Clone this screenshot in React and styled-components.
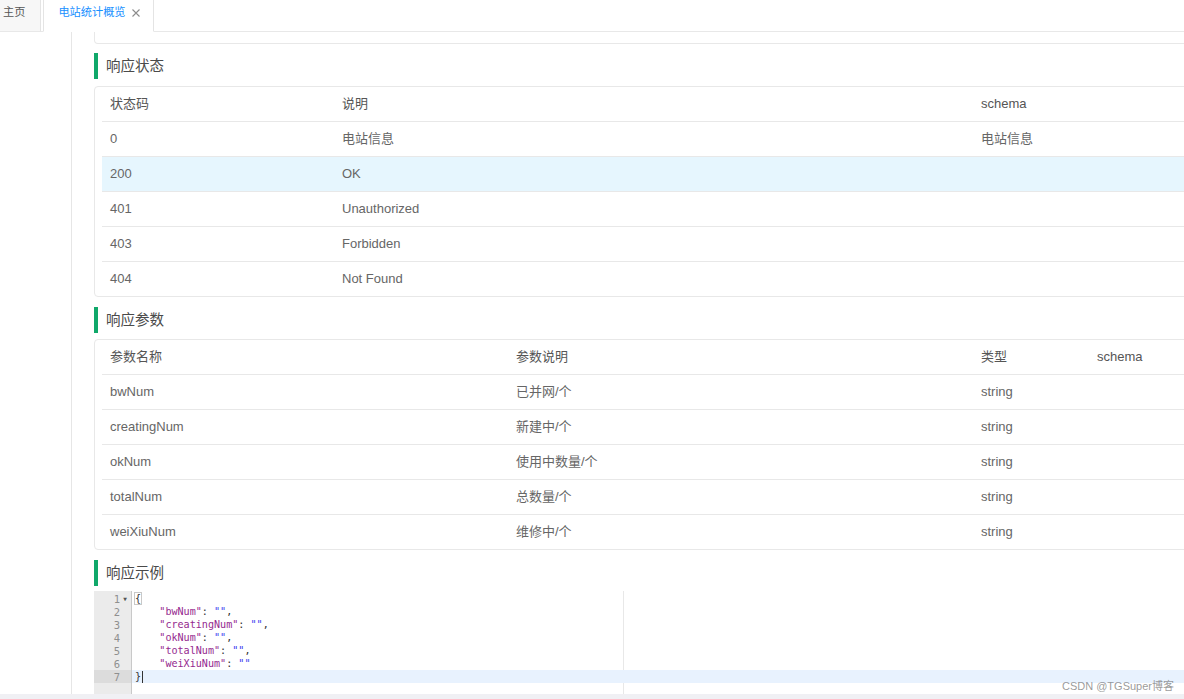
import React from 'react';
import styled, { createGlobalStyle } from 'styled-components';

const Global = createGlobalStyle`
  html, body { margin: 0; padding: 0; background: #fff; overflow: hidden; }
  body { font-family: "Liberation Sans", "Noto Sans CJK SC", sans-serif; }
  * { box-sizing: border-box; }
`;

const Page = styled.div`
  width: 1184px;
  height: 699px;
  display: flex;
  flex-direction: column;
  overflow: hidden;
  position: relative;
  background: #fff;
`;

const TabBar = styled.div`
  height: 32px;
  flex: none;
  display: flex;
  align-items: stretch;
  border-bottom: 1px solid #e8e8e8;
`;

const Tab = styled.div`
  height: 32px;
  margin-bottom: -1px;
  display: flex;
  align-items: center;
  gap: 6px;
  padding-bottom: 5px;
  font-size: 11.2px;
  line-height: 1;
  color: ${p => (p.$active ? '#1890ff' : '#555')};
  background: ${p => (p.$active ? '#fff' : '#f7f7f7')};
  border-right: 1px solid #e4e4e4;
  border-left: ${p => (p.$active ? '1px solid #e4e4e4' : 'none')};
  border-bottom: ${p => (p.$active ? '1px solid #fff' : '1px solid #e8e8e8')};
  padding-left: ${p => (p.$active ? '14px' : '3px')};
  padding-right: ${p => (p.$active ? '13px' : '15px')};
  margin-right: ${p => (p.$active ? '0' : '2px')};
`;

const CloseIcon = styled.svg`
  width: 8px;
  height: 8px;
  flex: none;
`;

const Body = styled.div`
  flex: 1;
  display: flex;
  min-height: 0;
`;

const Sidebar = styled.div`
  width: 72px;
  flex: none;
  border-right: 1px solid #e6e6e6;
  background: #fff;
`;

const Main = styled.div`
  flex: 1;
  min-width: 0;
  overflow: hidden;
  padding-left: 22px;
`;

const Inner = styled.div`
  width: 1160px;
  display: flex;
  flex-direction: column;
`;

const CardEnd = styled.div`
  height: 12px;
  border: 1px solid #e8e8e8;
  border-top: none;
  border-radius: 0 0 4px 4px;
`;

const Heading = styled.div`
  height: 26px;
  margin: ${p => (p.$first ? '9px' : '10px')} 0 ${p => p.$mb || 7}px;
  display: flex;
  align-items: center;
  border-left: 4px solid #10a86a;
  padding-left: 8px;
  padding-bottom: 1px;
  line-height: 1;
  font-size: 14.5px;
  color: #4a4a4a;
  font-family: "Noto Sans CJK SC", "Liberation Sans", sans-serif;
`;

const TableBox = styled.div`
  border: 1px solid #e8e8e8;
  border-radius: 4px;
  padding: 0 7px;
`;

const Row = styled.div`
  display: grid;
  grid-template-columns: ${p => p.$cols};
  height: 35px;
  align-items: center;
  border-bottom: 1px solid #e8e8e8;
  background: ${p => (p.$hl ? '#e6f6fe' : 'transparent')};
  &:last-child {
    border-bottom: none;
    height: 34px;
  }
`;

const Cell = styled.div`
  padding-left: 8px;
  padding-bottom: 2px;
  font-size: 13px;
  line-height: 1;
  color: ${p => (p.$head ? '#555' : '#666')};
  white-space: nowrap;
  overflow: hidden;
`;

const Editor = styled.div`
  height: 103px;
  display: flex;
  position: relative;
  font-family: "DejaVu Sans Mono", "Liberation Mono", monospace;
  font-size: 10.1px;
`;

const Gutter = styled.div`
  width: 38px;
  flex: none;
  padding-top: 1px;
  background: #ebebeb;
  border-right: 1px solid #c9c9c9;
`;

const GutterCell = styled.div`
  height: 13px;
  display: flex;
  align-items: center;
  justify-content: flex-end;
  padding-right: 1px;
  font-size: 10.5px;
  color: #8f8f8f;
  background: ${p => (p.$active ? '#dcdcdc' : 'transparent')};
`;

const Fold = styled.span`
  width: 10px;
  text-align: center;
  font-size: 6px;
  color: #555;
`;

const CodeArea = styled.div`
  flex: 1;
  position: relative;
  padding-top: 1px;
`;

const PrintMargin = styled.div`
  position: absolute;
  top: 0;
  bottom: 0;
  left: 491px;
  width: 1px;
  background: #e8e8e8;
`;

const CodeLine = styled.div`
  height: 13px;
  line-height: 13px;
  padding-left: 3px;
  white-space: pre;
  color: #333;
  background: ${p => (p.$active ? '#e8f2fe' : 'transparent')};
  position: relative;
`;

const Key = styled.span`
  color: #952a8f;
`;

const Str = styled.span`
  color: #3d3df0;
`;

const Brace = styled.span`
  outline: ${p => (p.$match ? '1px solid #c8c8c8' : 'none')};
  color: #333;
`;

const Cursor = styled.span`
  display: inline-block;
  width: 1px;
  height: 12px;
  background: #333;
  vertical-align: middle;
  margin-left: 1px;
`;

const Track = styled.div`
  height: 5px;
  flex: none;
  background: #f0f0f4;
`;

const Watermark = styled.div`
  position: absolute;
  right: 10px;
  top: 677px;
  font-size: 11px;
  color: rgba(110, 110, 110, 0.7);
  white-space: nowrap;
  font-family: "Liberation Sans", "Noto Sans CJK SC", sans-serif;
`;

const statusCols = '232px 639px 1fr';
const paramCols = '406px 465px 116px 1fr';

const statusRows = [
  ['0', '电站信息', '电站信息'],
  ['200', 'OK', ''],
  ['401', 'Unauthorized', ''],
  ['403', 'Forbidden', ''],
  ['404', 'Not Found', ''],
];

const paramRows = [
  ['bwNum', '已并网/个', 'string', ''],
  ['creatingNum', '新建中/个', 'string', ''],
  ['okNum', '使用中数量/个', 'string', ''],
  ['totalNum', '总数量/个', 'string', ''],
  ['weiXiuNum', '维修中/个', 'string', ''],
];

const codeItems = [
  ['bwNum', true],
  ['creatingNum', true],
  ['okNum', true],
  ['totalNum', true],
  ['weiXiuNum', false],
];

export default function App() {
  return (
    <Page>
      <Global />
      <TabBar>
        <Tab>主页</Tab>
        <Tab $active>
          电站统计概览
          <CloseIcon viewBox="0 0 8 8">
            <path d="M0.5 0.5 L7.5 7.5 M7.5 0.5 L0.5 7.5" stroke="#8c8c8c" strokeWidth="1.1" fill="none" />
          </CloseIcon>
        </Tab>
      </TabBar>
      <Body>
        <Sidebar />
        <Main>
          <Inner>
            <CardEnd />
            <Heading $first>响应状态</Heading>
            <TableBox>
              <Row $cols={statusCols}>
                <Cell $head>状态码</Cell>
                <Cell $head>说明</Cell>
                <Cell $head>schema</Cell>
              </Row>
              {statusRows.map((r, i) => (
                <Row key={i} $cols={statusCols} $hl={r[0] === '200'}>
                  {r.map((c, j) => (
                    <Cell key={j}>{c}</Cell>
                  ))}
                </Row>
              ))}
            </TableBox>
            <Heading $mb={6}>响应参数</Heading>
            <TableBox>
              <Row $cols={paramCols}>
                <Cell $head>参数名称</Cell>
                <Cell $head>参数说明</Cell>
                <Cell $head>类型</Cell>
                <Cell $head>schema</Cell>
              </Row>
              {paramRows.map((r, i) => (
                <Row key={i} $cols={paramCols}>
                  {r.map((c, j) => (
                    <Cell key={j}>{c}</Cell>
                  ))}
                </Row>
              ))}
            </TableBox>
            <Heading $mb={5}>响应示例</Heading>
            <Editor>
              <Gutter>
                {[1, 2, 3, 4, 5, 6, 7].map(n => (
                  <GutterCell key={n} $active={n === 7}>
                    {n}
                    <Fold>{n === 1 ? '▼' : ''}</Fold>
                  </GutterCell>
                ))}
              </Gutter>
              <CodeArea>
                <PrintMargin />
                <CodeLine>
                  <Brace $match>{'{'}</Brace>
                </CodeLine>
                {codeItems.map(([k, comma]) => (
                  <CodeLine key={k}>
                    {'    '}
                    <Key>"{k}"</Key>: <Str>""</Str>
                    {comma ? ',' : ''}
                  </CodeLine>
                ))}
                <CodeLine $active>
                  <Brace>{'}'}</Brace>
                  <Cursor />
                </CodeLine>
              </CodeArea>
            </Editor>
          </Inner>
        </Main>
      </Body>
      <Track />
      <Watermark>CSDN @TGSuper博客</Watermark>
    </Page>
  );
}
